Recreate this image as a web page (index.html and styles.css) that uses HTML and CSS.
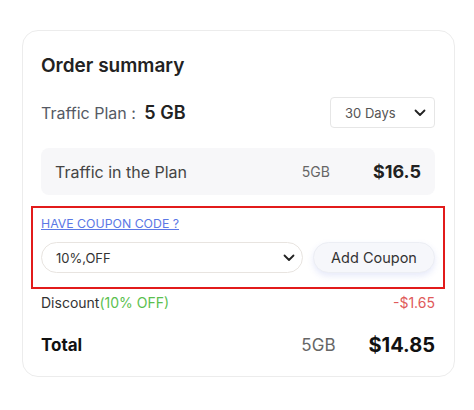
FILE: index.html
```html
<!DOCTYPE html>
<html>
<head>
<meta charset="utf-8">
<link rel="stylesheet" href="styles.css">
</head>
<body>
<div class="card">
  <div class="title">Order summary</div>
  <div class="plan-row">
    <div class="plan-label">Traffic Plan : <span class="plan-value">5 GB</span></div>
    <div class="days-select">
      <span>30 Days</span>
      <svg class="chev" width="12" height="8" viewBox="0 0 12 8"><path d="M1.5 1.5 L6 6 L10.5 1.5" fill="none" stroke="#222" stroke-width="1.8" stroke-linecap="round" stroke-linejoin="round"/></svg>
    </div>
  </div>
  <div class="gray-row">
    <span class="gr-label">Traffic in the Plan</span>
    <span class="gr-gb">5GB</span>
    <span class="gr-price">$16.5</span>
  </div>
  <div class="coupon-box">
    <a class="coupon-link" href="#">HAVE COUPON CODE ?</a>
    <div class="coupon-controls">
      <div class="coupon-select">
        <span>10%,OFF</span>
        <svg class="chev" width="12" height="8" viewBox="0 0 12 8"><path d="M1.5 1.5 L6 6 L10.5 1.5" fill="none" stroke="#222" stroke-width="1.8" stroke-linecap="round" stroke-linejoin="round"/></svg>
      </div>
      <button class="coupon-btn">Add Coupon</button>
    </div>
  </div>
  <div class="discount-row">
    <span>Discount<span class="green">(10% OFF)</span></span>
    <span class="red">-$1.65</span>
  </div>
  <div class="total-row">
    <span class="t-label">Total</span>
    <span class="t-gb">5GB</span>
    <span class="t-price">$14.85</span>
  </div>
</div>
</body>
</html>
```
FILE: styles.css
```css
* { box-sizing: border-box; }
html, body { margin: 0; padding: 0; background: #fff; }
body { font-family: Inter, "Noto Sans", sans-serif; color: #222; }

.card {
  margin: 30px 0 0 22px;
  width: 433px;
  height: 347px;
  border: 1px solid #ececec;
  border-radius: 16px;
  padding: 23px 19px 0 18px;
  display: flex;
  flex-direction: column;
}

.title {
  font-size: 19px;
  line-height: 24px;
  font-weight: 600;
  color: #222;
  height: 24px;
}

.plan-row {
  margin-top: 19px;
  height: 31px;
  display: flex;
  align-items: center;
  justify-content: space-between;
}
.plan-label { font-size: 16px; color: #555a64; }
.plan-value { font-size: 18px; font-weight: 600; color: #222; margin-left: 4px; }

.days-select {
  width: 105px;
  height: 31px;
  border: 1px solid #e6e6e6;
  border-radius: 4px;
  display: flex;
  align-items: center;
  justify-content: space-between;
  padding: 0 8px 0 14px;
  font-size: 13px;
  color: #555;
}

.gray-row {
  margin-top: 20px;
  height: 47px;
  background: #f7f7f9;
  border-radius: 8px;
  display: flex;
  align-items: center;
  padding: 0 14px;
}
.gr-label { font-size: 16px; color: #444; flex: 1; }
.gr-gb { font-size: 14px; color: #666; margin-right: 43px; }
.gr-price { font-size: 18px; font-weight: 700; color: #222; }

.coupon-box {
  margin: 11px -10px 0 -10px;
  border: 2px solid #e21b1b;
  padding: 8px 8px 14px 8px;
}
.coupon-link {
  display: block;
  font-size: 12.3px;
  line-height: 16px;
  color: #5b78e6;
  text-decoration: underline;
}
.coupon-controls {
  margin-top: 10px;
  display: flex;
  gap: 10px;
}
.coupon-select {
  width: 262px;
  height: 31px;
  border: 1px solid #e8e4e0;
  border-radius: 16px;
  display: flex;
  align-items: center;
  justify-content: space-between;
  padding: 0 7px 0 14px;
  font-size: 13px;
  color: #333;
}
.coupon-btn {
  width: 122px;
  height: 31px;
  border: 1px solid #eceef4;
  border-radius: 16px;
  background: #f6f7fb;
  box-shadow: 0 3px 6px rgba(120, 140, 230, 0.18);
  font-family: Inter, "Noto Sans", sans-serif;
  font-size: 14.5px;
  color: #333;
  padding: 0;
}

.discount-row {
  margin-top: 4px;
  height: 20px;
  line-height: 20px;
  display: flex;
  justify-content: space-between;
  font-size: 14px;
  color: #333;
}
.green { color: #5bbf4f; }
.red { color: #e05a5a; }

.total-row {
  margin-top: 17px;
  height: 30px;
  display: flex;
  align-items: center;
}
.t-label { font-size: 17px; font-weight: 700; color: #111; flex: 1; }
.t-gb { font-size: 17px; color: #666; margin-right: 33px; }
.t-price { font-size: 20px; font-weight: 700; color: #111; }
```
